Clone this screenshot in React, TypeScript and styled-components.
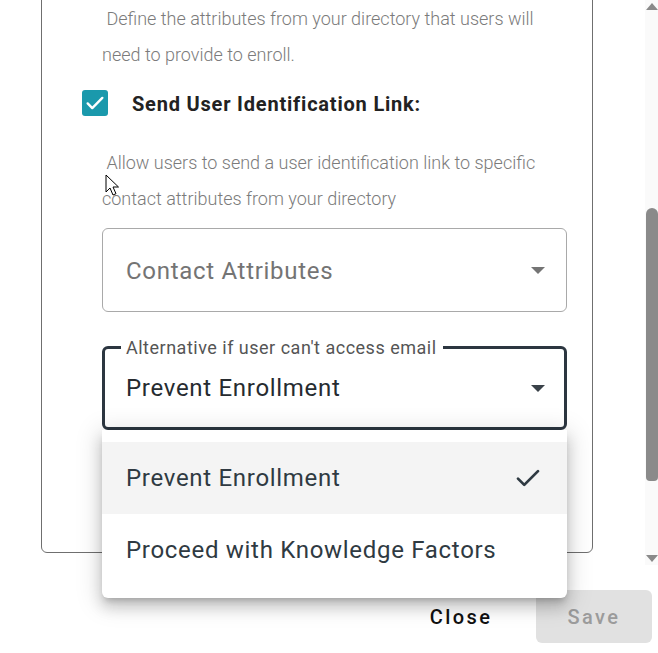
import React from "react";
import styled, { createGlobalStyle } from "styled-components";

const GlobalStyle = createGlobalStyle`
  html, body {
    margin: 0;
    padding: 0;
    background: #ffffff;
    font-family: Roboto, "Noto Sans", Arial, sans-serif;
  }
  * {
    box-sizing: border-box;
  }
`;

const Screen = styled.div`
  position: relative;
  width: 658px;
  height: 653px;
  display: flex;
  flex-direction: column;
  overflow: hidden;
  background: #fff;
`;

const Body = styled.div`
  display: flex;
  height: 565px;
`;

// content is scrolled to the bottom, so the top of the panel is clipped
const ScrollArea = styled.div`
  flex: 1;
  display: flex;
  flex-direction: column;
  justify-content: flex-end;
  overflow: hidden;
  padding: 0 52px 12px 41px;
`;

const Panel = styled.div`
  flex-shrink: 0;
  border: 1px solid #6f6f6f;
  border-radius: 6px;
  padding: 40px 25px 122px 40px;
`;

const Description = styled.p<{ $top: number }>`
  margin: ${({ $top }) => `${$top}px 0 0 20px`};
  font-size: 18px;
  font-weight: 300;
  line-height: 36px;
  color: #7b7b7b;
  white-space: pre-wrap;
`;

const CheckRow = styled.label<{ $top: number }>`
  display: flex;
  align-items: center;
  gap: 24px;
  height: 40px;
  margin: ${({ $top }) => `${$top}px 0 0 0`};
`;

const CheckBox = styled.span`
  width: 26px;
  height: 26px;
  border-radius: 3px;
  background: #1a99ac;
  display: flex;
  align-items: center;
  justify-content: center;
`;

const CheckLabel = styled.span`
  font-size: 20px;
  font-weight: 700;
  color: #222;
  letter-spacing: 0.8px;
  margin-top: 1px;
`;

const SelectBox = styled.div<{ $focused?: boolean; $top: number }>`
  position: relative;
  margin: ${({ $top }) => `${$top}px 0 0 20px`};
  height: 84px;
  border: ${({ $focused }) => ($focused ? "3px solid #2c3640" : "1px solid #a9a9a9")};
  border-radius: 6px;
  display: flex;
  align-items: center;
  justify-content: space-between;
  padding: ${({ $focused }) => ($focused ? "0 19px 0 21px" : "0 21px 0 23px")};
`;

const SelectText = styled.span<{ $placeholder?: boolean }>`
  font-size: 24px;
  letter-spacing: 0.7px;
  color: ${({ $placeholder }) => ($placeholder ? "#747474" : "#262b30")};
  margin-top: ${({ $placeholder }) => ($placeholder ? "2px" : "0")};
`;

const FloatLabel = styled.span`
  position: absolute;
  top: -12px;
  left: 16px;
  padding: 0 6px 0 5px;
  background: #fff;
  font-size: 18px;
  letter-spacing: 0.5px;
  color: #555;
  line-height: 22px;
`;

const Caret = styled.span<{ $dark?: boolean }>`
  width: 0;
  height: 0;
  border-left: 7px solid transparent;
  border-right: 7px solid transparent;
  border-top: 7px solid ${({ $dark }) => ($dark ? "#3a4249" : "#747474")};
`;

const ScrollTrack = styled.div`
  width: 13px;
  background: #fafafa;
  display: flex;
  flex-direction: column;
  align-items: center;
  padding: 3px 0 3px 1px;
`;

const Arrow = styled.span<{ $down?: boolean }>`
  width: 0;
  height: 0;
  border-left: 6px solid transparent;
  border-right: 6px solid transparent;
  ${({ $down }) =>
    $down ? "border-top: 7px solid #8a8a8a;" : "border-bottom: 7px solid #8a8a8a;"}
`;

const TrackSpace = styled.div`
  flex: 1;
  display: flex;
  flex-direction: column;
  padding: 198px 0 74px 0;
  width: 100%;
`;

const Thumb = styled.div`
  flex: 1;
  background: #8a8a8a;
  border-radius: 6px 6px 4px 4px;
`;

const Footer = styled.div`
  display: flex;
  justify-content: flex-end;
  align-items: flex-start;
  gap: 17px;
  padding: 25px 6px 0 0;
`;

const Button = styled.button<{ $primary?: boolean }>`
  width: 116px;
  height: 53px;
  border: none;
  border-radius: 6px;
  font-family: Roboto, Arial, sans-serif;
  font-size: 20px;
  font-weight: 500;
  letter-spacing: 2.4px;
  background: ${({ $primary }) => ($primary ? "#e1e1e1" : "transparent")};
  color: ${({ $primary }) => ($primary ? "#9b9b9b" : "#111")};
`;

const Menu = styled.ul`
  position: absolute;
  top: 430px;
  left: 102px;
  width: 465px;
  margin: 0;
  padding: 12px 0;
  list-style: none;
  background: #fff;
  border-radius: 0 0 6px 6px;
  box-shadow: 0 5px 6px -3px rgba(0, 0, 0, 0.2), 0 9px 14px 1px rgba(0, 0, 0, 0.14),
    0 4px 24px 4px rgba(0, 0, 0, 0.13);
`;

const MenuItem = styled.li<{ $selected?: boolean }>`
  height: 72px;
  display: flex;
  align-items: center;
  justify-content: space-between;
  padding: 0 24px 0 24px;
  background: ${({ $selected }) => ($selected ? "#f4f4f4" : "#fff")};
  font-size: 24px;
  letter-spacing: 0.7px;
  color: #2f3a42;
`;

const Cursor = styled.svg`
  position: absolute;
  left: 105px;
  top: 174px;
`;

const CheckIcon = ({ color, size, width }: { color: string; size: number; width: number }) => (
  <svg width={size} height={size} viewBox="0 0 24 24" fill="none">
    <path d="M4 12.5l5 5L20 6.5" stroke={color} strokeWidth={width} strokeLinecap="round" strokeLinejoin="round" />
  </svg>
);

export default function App() {
  return (
    <Screen>
      <GlobalStyle />
      <Body>
        <ScrollArea>
          <Panel>
            <Description $top={0}>
              {" Define the attributes from your directory that users will\nneed to provide to enroll."}
            </Description>
            <CheckRow $top={10}>
              <CheckBox>
                <CheckIcon color="#fff" size={22} width={2.6} />
              </CheckBox>
              <CheckLabel>Send User Identification Link:</CheckLabel>
            </CheckRow>
            <Description $top={22}>
              {" Allow users to send a user identification link to specific\ncontact attributes from your directory"}
            </Description>
            <SelectBox $top={11}>
              <SelectText $placeholder>Contact Attributes</SelectText>
              <Caret />
            </SelectBox>
            <SelectBox $focused $top={34}>
              <FloatLabel>Alternative if user can't access email</FloatLabel>
              <SelectText>Prevent Enrollment</SelectText>
              <Caret $dark />
            </SelectBox>
          </Panel>
        </ScrollArea>
        <ScrollTrack>
          <Arrow />
          <TrackSpace>
            <Thumb />
          </TrackSpace>
          <Arrow $down />
        </ScrollTrack>
      </Body>
      <Footer>
        <Button>Close</Button>
        <Button $primary>Save</Button>
      </Footer>
      <Menu>
        <MenuItem $selected>
          Prevent Enrollment
          <CheckIcon color="#2f3a42" size={30} width={2.2} />
        </MenuItem>
        <MenuItem>Proceed with Knowledge Factors</MenuItem>
      </Menu>
      <Cursor width="14" height="22" viewBox="0 0 14 22">
        <path d="M1 1v17l4-4 3 7 3-1.3-3-6.7h5.5z" fill="#fff" stroke="#000" strokeWidth="1" strokeLinejoin="round" />
      </Cursor>
    </Screen>
  );
}
